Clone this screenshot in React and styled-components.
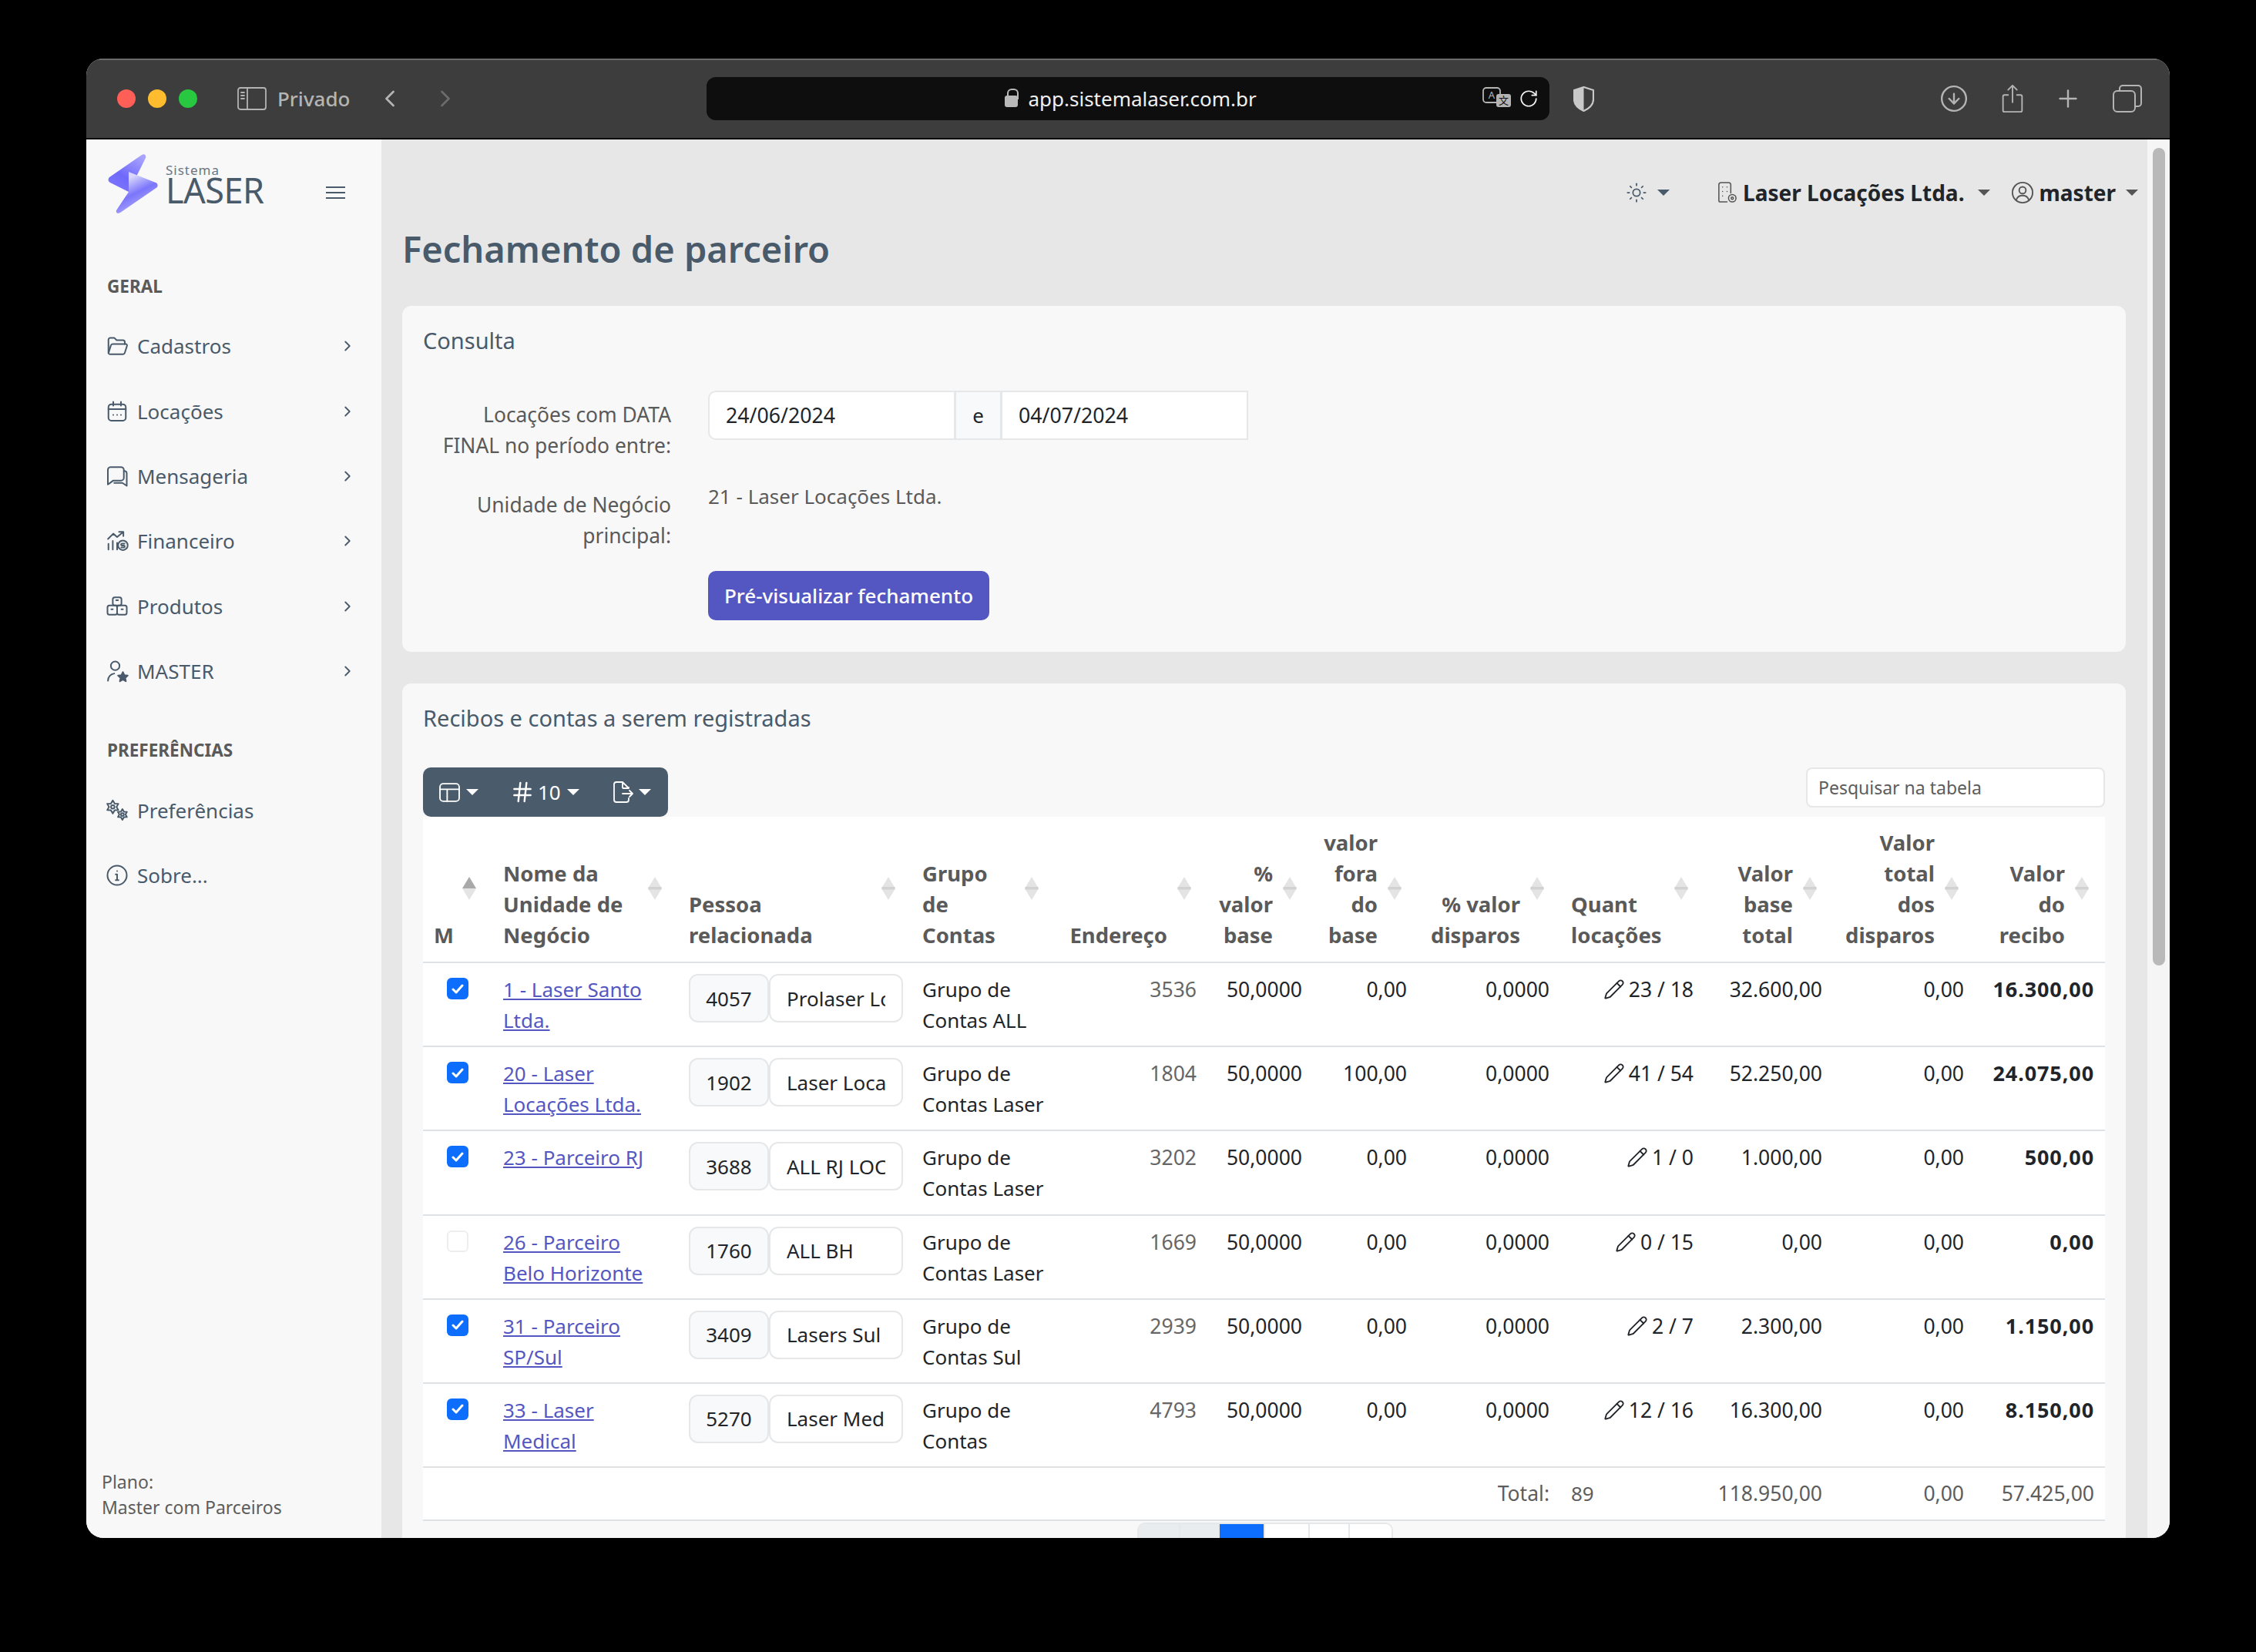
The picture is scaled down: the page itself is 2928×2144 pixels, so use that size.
import React from "react";
import styled, { createGlobalStyle } from "styled-components";
import { ChevronLeft, ChevronRight, Plus, Hash, Pencil, Sun, RotateCw, CircleArrowDown } from "lucide-react";

const Global = createGlobalStyle`
  html, body { margin: 0; padding: 0; background: #000; height: 2144px; overflow: hidden; }
  body { width: 2928px; font-family: "Noto Sans", "Open Sans", sans-serif; font-size: 26px; line-height: 40px; color: #212529; }
  * { box-sizing: border-box; }
`;

const Page = styled.div`
  padding: 76px 112px 148px;
  height: 2144px;
  overflow: hidden;
`;
const Win = styled.div`
  width: 2704px;
  height: 1920px;
  border-radius: 22px;
  overflow: hidden;
  display: flex;
  flex-direction: column;
  background: #f8f8f8;
`;

/* safari bar */
const Bar = styled.div`
  height: 105px;
  flex: none;
  background: #3d3d3d;
  border-top: 2px solid #6b6b6b;
  border-bottom: 2px solid #0a0a0a;
  display: flex;
  align-items: center;
  padding-bottom: 1px;
  color: #b4b4b4;
`;
const Dot = styled.span`
  width: 24px;
  height: 24px;
  border-radius: 50%;
  background: ${p => p.$c};
  margin-left: ${p => p.$ml}px;
  flex: none;
`;
const BarSlot = styled.span`
  display: flex;
  flex: none;
  margin-left: ${p => p.$ml}px;
  color: ${p => p.$c || "inherit"};
`;
const Privado = styled.span`
  margin-left: 14px;
  font-size: 26px;
  font-weight: 500;
  color: #b4b4b4;
`;
const Url = styled.div`
  width: 1094px;
  height: 56px;
  margin-left: 321px;
  flex: none;
  background: #0e0e0e;
  border-radius: 12px;
  display: flex;
  align-items: center;
  padding-left: 387px;
  color: #f2f2f2;
  font-size: 26px;
`;
const Lock = styled.span`
  width: 17px;
  height: 15px;
  margin-right: 13px;
  margin-top: 7px;
  background: #b9b9b9;
  border-radius: 3px;
  position: relative;
  &::before {
    content: "";
    position: absolute;
    left: 3px;
    top: -9px;
    width: 11px;
    height: 12px;
    border: 2px solid #b9b9b9;
    border-bottom: 0;
    border-radius: 6px 6px 0 0;
  }
`;
const UrlText = styled.span`
  width: 296px;
  white-space: nowrap;
  color: #f0f0f0;
`;

/* app layout */
const Body = styled.div`
  flex: 1;
  display: flex;
  min-height: 0;
`;
const Side = styled.aside`
  width: 383px;
  flex: none;
  background: #f8f8f8;
  display: flex;
  flex-direction: column;
  color: #495a6b;
`;
const Brand = styled.div`
  height: 103px;
  margin-top: 18px;
  display: flex;
  align-items: flex-start;
  padding-left: 28px;
`;
const BrandText = styled.div`
  margin-left: 9px;
  margin-top: 14px;
  display: flex;
  flex-direction: column;
  width: 208px;
`;
const Sistema = styled.span`
  font-size: 17px;
  line-height: 16px;
  letter-spacing: 1px;
  color: #6a7784;
`;
const Laser = styled.span`
  font-size: 45px;
  line-height: 36px;
  color: #495a6b;
  letter-spacing: -0.5px;
`;
const Burger = styled.span`
  width: 25px;
  height: 16px;
  margin-top: 43px;
  border-top: 2px solid #495a6b;
  border-bottom: 2px solid #495a6b;
  position: relative;
  &::after {
    content: "";
    position: absolute;
    left: 0;
    right: 0;
    top: 5px;
    height: 2px;
    background: #495a6b;
  }
`;
const NavHead = styled.div`
  margin: ${p => p.$mt}px 0 0 27px;
  font-size: 22.500px;
  line-height: 28px;
  font-weight: 700;
  color: #5a5a5a;
`;
const Spacer = styled.div`
  height: 21px;
`;
const NavItem = styled.div`
  height: 84.4px;
  display: flex;
  align-items: center;
  padding: 0 33px 0 25px;
  color: #495a6b;
  font-size: 26px;
`;
const NavLabel = styled.span`
  margin-left: 11px;
  flex: 1;
`;
const Plano = styled.div`
  margin-top: auto;
  padding: 0 0 23px 20px;
  font-size: 23px;
  line-height: 33px;
  color: #5d5d5d;
`;

const Main = styled.main`
  flex: 1;
  background: #e7e7e7;
  padding: 0 28px 0 27px;
  overflow: hidden;
  min-width: 0;
`;
const Track = styled.div`
  width: 29px;
  flex: none;
  background: #f5f5f5;
  padding: 11px 6px 0 7px;
`;
const Thumb = styled.div`
  height: 1061px;
  background: #b9b9b9;
  border-radius: 8px;
`;
const Top = styled.div`
  height: 40px;
  margin-top: 49px;
  display: flex;
  align-items: center;
  color: #212529;
  font-weight: 700;
  font-size: 28px;
  white-space: nowrap;
`;
const TopSlot = styled.span`
  display: flex;
  align-items: center;
  margin-left: ${p => p.$ml || 0}px;
  color: ${p => p.$c || "inherit"};
`;
const Caret = styled.span`
  display: inline-block;
  flex: none;
  width: 0;
  height: 0;
  border-left: ${p => p.$s || 8}px solid transparent;
  border-right: ${p => p.$s || 8}px solid transparent;
  border-top: ${p => p.$s || 8}px solid ${p => p.$c || "#555"};
  margin-left: ${p => p.$ml || 0}px;
`;
const Title = styled.h1`
  margin: 23px 0 44px;
  font-size: 47px;
  line-height: 60px;
  font-weight: 600;
  color: #495a6b;
`;
const Card = styled.section`
  background: #f8f8f8;
  border-radius: 12px;
  padding: ${p => p.$pt}px 27px ${p => p.$pb}px;
  margin-bottom: 41px;
`;
const CardTitle = styled.h2`
  margin: 0;
  font-size: 29px;
  line-height: 40px;
  font-weight: 400;
  color: #495a6b;
`;
const FormRow = styled.div`
  display: grid;
  grid-template-columns: 322px 1fr;
  column-gap: 48px;
  margin-bottom: 26px;
`;
const FormFirst = styled(FormRow)`
  margin-top: 45px;
`;
const Label = styled.div`
  text-align: right;
  padding-top: 11px;
  color: #5a5a5a;
  font-size: 26.400px;
`;
const Static = styled.div`
  color: #5a5a5a;
  font-size: 26px;
`;
const DateGroup = styled.div`
  display: flex;
  height: 64px;
  width: 703px;
`;
const DateBox = styled.div`
  width: 321px;
  background: #fff;
  border: 2px solid #e6e7e8;
  border-radius: ${p => (p.$first ? "10px 0 0 10px" : "0")};
  padding-left: 21px;
  display: flex;
  align-items: center;
  font-size: 26.700px;
`;
const DateJoin = styled.div`
  width: 61px;
  margin: 0 -1px;
  background: #f8f9fa;
  border: 2px solid #e6e7e8;
  display: flex;
  align-items: center;
  justify-content: center;
  font-size: 26px;
`;
const Primary = styled.button`
  width: 365px;
  height: 64px;
  border: 0;
  border-radius: 10px;
  background: #5457c1;
  color: #fff;
  font-family: inherit;
  font-size: 26px;
  font-weight: 500;
  padding: 0;
`;
const Tools = styled.div`
  margin-top: 44px;
  height: 64px;
  display: flex;
  justify-content: space-between;
  align-items: flex-start;
`;
const ToolGroup = styled.div`
  width: 318px;
  height: 64px;
  border-radius: 10px;
  background: #4a5b6c;
  color: #fff;
  display: flex;
  align-items: center;
  padding-left: 21px;
`;
const ToolSlot = styled.span`
  display: flex;
  align-items: center;
  margin-left: ${p => p.$ml || 0}px;
`;
const Search = styled.div`
  width: 388px;
  height: 52px;
  background: #fff;
  border: 2px solid #e6e7e8;
  border-radius: 8px;
  padding-left: 14px;
  display: flex;
  align-items: center;
  font-size: 23px;
  color: #5d5d5d;
`;

const Table = styled.table`
  width: 2183px;
  table-layout: fixed;
  border-collapse: separate;
  border-spacing: 0;
  background: #fff;
`;
const Col = styled.col`
  width: ${p => p.$w}px;
`;
const Th = styled.th`
  position: relative;
  padding: 14px 14px 14px;
  padding-right: ${p => (p.$right ? 52 : 14)}px;
  text-align: ${p => (p.$right ? "right" : "left")};
  vertical-align: bottom;
  font-weight: 700;
  font-size: 27.500px;
  color: #5a5a5a;
  border-bottom: 2px solid #dfe2e4;
  white-space: nowrap;
`;
const Sort = styled.svg`
  position: absolute;
  right: 20px;
  top: 78px;
  width: 20px;
  height: 30px;
`;
const Td = styled.td`
  padding: 14px 14px 13.2px;
  vertical-align: top;
  text-align: ${p => (p.$right ? "right" : "left")};
  font-weight: ${p => (p.$bold ? 700 : 400)};
  letter-spacing: ${p => (p.$bold ? 0.9 : 0)}px;
  color: ${p => p.$c || "#212529"};
  font-size: ${p => (p.$bold ? 27 : p.$right ? 26.5 : 26)}px;
  height: 109.2px;
  border-bottom: 2px solid #dfe2e4;
  white-space: nowrap;
`;
const Foot = styled(Td)`
  height: 69px;
  padding: 13px 14px;
  color: #5d5d5d;
`;
const Check = styled.span`
  display: flex;
  align-items: center;
  justify-content: center;
  width: 28px;
  height: 28px;
  margin: 5px 0 0 17px;
  border-radius: 6px;
  background: ${p => (p.$on ? "#0d6efd" : "#fff")};
  border: ${p => (p.$on ? "0" : "2px solid #eceeef")};
`;
const Link = styled.a`
  color: #5457c1;
  text-decoration: underline;
  display: block;
`;
const PersonGroup = styled.div`
  display: flex;
  width: 278px;
  height: 63px;
`;
const PersonId = styled.div`
  width: 104px;
  background: #f8f9fa;
  border: 2px solid #e6e7e8;
  border-radius: 12px;
  display: flex;
  align-items: center;
  justify-content: center;
`;
const PersonName = styled.div`
  width: 174px;
  background: #fff;
  border: 2px solid #e6e7e8;
  border-radius: 12px;
  padding: 0 21px;
  display: flex;
  align-items: center;
`;
const PersonClip = styled.span`
  display: block;
  overflow: hidden;
`;
const Qty = styled.span`
  display: inline-flex;
  align-items: center;
  gap: 5px;
`;
const Pager = styled.div`
  display: flex;
  width: 332px;
  height: 60px;
  margin: 2px 0 0 927px;
  border: 2px solid #e6e7e8;
  border-radius: 10px 10px 0 0;
  overflow: hidden;
`;
const PageCell = styled.span`
  width: ${p => p.$w}px;
  flex: none;
  background: ${p => p.$bg};
  border-right: 2px solid #e6e7e8;
`;

const Svg = styled.svg`
  flex: none;
  width: ${p => p.$s || 30}px;
  height: ${p => p.$s || 30}px;
  fill: none;
  stroke: currentColor;
  stroke-width: ${p => p.$sw || 1.6};
  stroke-linecap: round;
  stroke-linejoin: round;
`;
const Chev = styled(ChevronRight)`
  flex: none;
`;

const icons = {
  folder: <><path d="M3 19V5.5A2 2 0 0 1 5 3.5h4l2.5 2.5H18a2 2 0 0 1 2 2V10" /><path d="M3 19.5l2.5-8A2 2 0 0 1 7.4 10H21a1.4 1.4 0 0 1 1.3 1.8L20 19a2.2 2.2 0 0 1-2 1.6H5a2 2 0 0 1-2-1.1z" /></>,
  calendar: <><rect x="3" y="4.5" width="18" height="17" rx="3" /><path d="M3 9.5h18M8 2v4M16 2v4M8 15.5h.01M12 15.5h.01M16 15.5h.01" /></>,
  chat: <><path d="M5 2.5h11a3 3 0 0 1 3 3v8a3 3 0 0 1-3 3H8l-4 3-1.600 1V5a3 3 0 0 1 2.600-2.500z" /><path d="M19 6.500h.500a2.500 2.500 0 0 1 2.500 2.500v13l-4.500-3H9" /></>,
  money: <><path d="M3 21v-6M7.500 21v-9M12 21v-7" /><path d="M2.500 10L8 4.500l4 3.500 6-5M14 2.500h4.500V7" /><circle cx="18" cy="16.500" r="5" /><path d="M19.700 14.800h-2.600a1 1 0 0 0 0 2h1.800a1 1 0 0 1 0 2h-2.600" /></>,
  boxes: <><rect x="7.500" y="2.500" width="9" height="8.500" rx="2" /><rect x="2" y="11" width="10" height="9.500" rx="2" /><rect x="12" y="11" width="10" height="9.500" rx="2" /><path d="M11 5.500h2M6 15h1.500M16.500 15H18" /></>,
  userStar: <><circle cx="10" cy="6.500" r="4.500" /><path d="M2.500 22c0-4 2.800-7 6.500-7.500" /><path d="M18 13l1.500 3.200 3.500.4-2.600 2.400.7 3.500-3.100-1.800-3.100 1.800.7-3.500-2.600-2.400 3.500-.4z" fill="currentColor" /></>,
  gears: <><path d="M7.500 1.500l2 3.300 3.800.1-1.900 3.300 1.900 3.300-3.800.1-2 3.300-2-3.300-3.800-.1 1.900-3.300L1.700 4.900l3.800-.1z" /><circle cx="7.500" cy="8.200" r="1.800" /><path d="M17.500 10.500l1.600 2.700 3.100.1-1.500 2.700 1.500 2.700-3.100.1-1.600 2.700-1.600-2.700-3.100-.1 1.500-2.700-1.500-2.700 3.100-.1z" /><circle cx="17.500" cy="16" r="1.500" /></>,
  info: <><circle cx="12" cy="12" r="10" /><path d="M12 11v6M12 7.500h.01M10.500 11H12M10.500 17h3" /></>,
};

const Ico = ({ name, s }) => <Svg viewBox="0 0 24 24" $s={s}>{icons[name]}</Svg>;

const Logo = () => (
  <svg width="66" height="80" viewBox="0 0 66 80">
    <defs>
      <linearGradient id="lg1" x1="0.8" y1="0" x2="0.2" y2="1">
        <stop offset="0" stopColor="#a9a5ff" />
        <stop offset="0.6" stopColor="#6f69fb" />
        <stop offset="1" stopColor="#7c76fb" />
      </linearGradient>
      <linearGradient id="lg2" x1="0.2" y1="0.2" x2="0.6" y2="1">
        <stop offset="0" stopColor="#d9d8fb" />
        <stop offset="0.45" stopColor="#7b75fb" />
        <stop offset="1" stopColor="#b9b6fc" />
      </linearGradient>
    </defs>
    <path d="M44 2c3-2 6 0 5 4L27 50 3 38c-3-1.500-3-5-1-7z" fill="url(#lg1)" />
    <path d="M27 24l35 14c3 1 3 4 2 6L16 77c-3 2-6 0-5-3l16-24z" fill="url(#lg2)" />
  </svg>
);

const Sidebar = () => (
  <Svg viewBox="0 0 38 30" $s={38} $sw={1.8}>
    <rect x="1" y="1" width="36" height="28" rx="3" />
    <path d="M13 1v28M5 7h4M5 11h4M5 15h4" />
  </Svg>
);
const Share = () => (
  <Svg viewBox="0 0 32 40" $s={38} $sw={2}>
    <path d="M10 15H5a2 2 0 0 0-2 2v19a2 2 0 0 0 2 2h22a2 2 0 0 0 2-2V17a2 2 0 0 0-2-2h-5M16 25V2M10 8l6-6 6 6" />
  </Svg>
);
const Tabs = () => (
  <Svg viewBox="0 0 38 36" $s={38} $sw={2}>
    <rect x="1" y="8" width="28" height="27" rx="5" />
    <path d="M9 8V5a4 4 0 0 1 4-4h20a4 4 0 0 1 4 4v19a4 4 0 0 1-4 4h-4" />
  </Svg>
);
const Shield = () => (
  <svg width="27" height="33" viewBox="0 0 27 33">
    <path d="M13.500 1L26 5v12c0 8-6 12-12.500 15C7 29 1 25 1 17V5z" fill="none" stroke="#c8c8c8" strokeWidth="2.200" />
    <path d="M13.500 1L1 5v12c0 8 6 12 12.500 15z" fill="#c8c8c8" />
  </svg>
);
const Translate = () => (
  <svg width="38" height="30" viewBox="0 0 38 30">
    <rect x="1" y="1" width="22" height="19" rx="4" fill="none" stroke="#b4b4b4" strokeWidth="1.800" />
    <text x="12" y="15" fontSize="13" textAnchor="middle" fill="#b4b4b4" fontFamily="Noto Sans">A</text>
    <rect x="18" y="9" width="19" height="17" rx="3" fill="#b4b4b4" />
    <text x="27.500" y="22" fontSize="13" textAnchor="middle" fill="#111" fontFamily="Noto Sans CJK SC">文</text>
  </svg>
);
const Building = () => (
  <Svg viewBox="0 0 26 30" $s={29} $sw={1.6}>
    <path d="M13 27H4a2 2 0 0 1-2-2V4a3 3 0 0 1 3-3h10a3 3 0 0 1 3 3v11" />
    <path d="M7 7h.01M13 7h.01M7 13h.01M13 13h.01M7 19h.01" />
    <circle cx="20" cy="22" r="5" />
    <circle cx="20" cy="22" r="1.500" />
  </Svg>
);
const UserRound = () => (
  <Svg viewBox="0 0 24 24" $s={30} $sw={1.5}>
    <circle cx="12" cy="12" r="10.500" />
    <circle cx="12" cy="9.500" r="3.500" />
    <path d="M5.500 19.500c1-3 3.500-4.500 6.500-4.500s5.500 1.500 6.500 4.500" />
  </Svg>
);
const LayoutIcon = () => (
  <Svg viewBox="0 0 26 26" $s={27} $sw={1.8}>
    <rect x="1" y="2" width="24" height="22" rx="4" />
    <path d="M1 9h24M10 9v15" />
  </Svg>
);
const FileOut = () => (
  <Svg viewBox="0 0 28 28" $s={28} $sw={1.8}>
    <path d="M22 8v1h-7a1 1 0 0 1-1-1V1H6a3 3 0 0 0-3 3v20a3 3 0 0 0 3 3h13a3 3 0 0 0 3-3v-2M14 1l8 8M14 16h13M23 12l4 4-4 4" />
  </Svg>
);
const SortIcon = ({ up }) => (
  <Sort viewBox="0 0 20 30">
    <path d="M10 0l9 15H1z" fill={up ? "#a9a9a9" : "#e4e4e4"} />
    <path d="M10 30l-9-15h18z" fill="#e4e4e4" />
    {!up && <rect x="1.500" y="13" width="17" height="3.500" fill="#d2d2d2" />}
  </Sort>
);

const nav = [
  ["folder", "Cadastros"],
  ["calendar", "Locações"],
  ["chat", "Mensageria"],
  ["money", "Financeiro"],
  ["boxes", "Produtos"],
  ["userStar", "MASTER"],
];

const cols = [90, 241, 303, 186, 198, 137, 136, 185, 187, 167, 184, 169];

const headers = [
  { lines: ["M"], up: true },
  { lines: ["Nome da", "Unidade de", "Negócio"] },
  { lines: ["Pessoa", "relacionada"] },
  { lines: ["Grupo", "de", "Contas"] },
  { lines: ["Endereço"], right: true },
  { lines: ["%", "valor", "base"], right: true },
  { lines: ["valor", "fora", "do", "base"], right: true },
  { lines: ["% valor", "disparos"], right: true },
  { lines: ["Quant", "locações"] },
  { lines: ["Valor", "base", "total"], right: true },
  { lines: ["Valor", "total", "dos", "disparos"], right: true },
  { lines: ["Valor", "do", "recibo"], right: true },
];

const rows = [
  { on: true, nome: ["1 - Laser Santo", "Ltda."], id: "4057", pessoa: "Prolaser Locações", grupo: ["Grupo de", "Contas ALL"], end: "3536", fora: "0,00", qty: "23 / 18", base: "32.600,00", recibo: "16.300,00" },
  { on: true, nome: ["20 - Laser", "Locações Ltda."], id: "1902", pessoa: "Laser Locações", grupo: ["Grupo de", "Contas Laser"], end: "1804", fora: "100,00", qty: "41 / 54", base: "52.250,00", recibo: "24.075,00" },
  { on: true, nome: ["23 - Parceiro RJ"], id: "3688", pessoa: "ALL RJ LOCAÇÕES", grupo: ["Grupo de", "Contas Laser"], end: "3202", fora: "0,00", qty: "1 / 0", base: "1.000,00", recibo: "500,00" },
  { on: false, nome: ["26 - Parceiro", "Belo Horizonte"], id: "1760", pessoa: "ALL BH", grupo: ["Grupo de", "Contas Laser"], end: "1669", fora: "0,00", qty: "0 / 15", base: "0,00", recibo: "0,00" },
  { on: true, nome: ["31 - Parceiro", "SP/Sul"], id: "3409", pessoa: "Lasers Sul", grupo: ["Grupo de", "Contas Sul"], end: "2939", fora: "0,00", qty: "2 / 7", base: "2.300,00", recibo: "1.150,00" },
  { on: true, nome: ["33 - Laser", "Medical"], id: "5270", pessoa: "Laser Medical", grupo: ["Grupo de", "Contas"], end: "4793", fora: "0,00", qty: "12 / 16", base: "16.300,00", recibo: "8.150,00" },
];

const pages = [
  [54, "#e9ecef"],
  [51, "#e9ecef"],
  [59, "#0d6efd"],
  [58, "#fff"],
  [52, "#fff"],
  [56, "#fff"],
];

export default function App() {
  return (
    <>
      <Global />
      <Page>
        <Win>
          <Bar>
            <Dot $c="#ff5f57" $ml={40} />
            <Dot $c="#febc2e" $ml={16} />
            <Dot $c="#28c840" $ml={16} />
            <BarSlot $ml={52}><Sidebar /></BarSlot>
            <Privado>Privado</Privado>
            <BarSlot $ml={34}><ChevronLeft size={36} strokeWidth={1.8} /></BarSlot>
            <BarSlot $ml={36} $c="#6c6c6c"><ChevronRight size={36} strokeWidth={1.8} /></BarSlot>
            <Url>
              <Lock />
              <UrlText>app.sistemalaser.com.br</UrlText>
              <BarSlot $ml={294}><Translate /></BarSlot>
              <BarSlot $ml={9}><RotateCw size={26} strokeWidth={1.6} /></BarSlot>
            </Url>
            <BarSlot $ml={31}><Shield /></BarSlot>
            <BarSlot $ml={448}><CircleArrowDown size={38} strokeWidth={1.5} /></BarSlot>
            <BarSlot $ml={38}><Share /></BarSlot>
            <BarSlot $ml={35}><Plus size={36} strokeWidth={1.6} /></BarSlot>
            <BarSlot $ml={40}><Tabs /></BarSlot>
          </Bar>
          <Body>
            <Side>
              <Brand>
                <Logo />
                <BrandText>
                  <Sistema>Sistema</Sistema>
                  <Laser>LASER</Laser>
                </BrandText>
                <Burger />
              </Brand>
              <NavHead $mt={56}>GERAL</NavHead>
              <div>
                <Spacer />
                {nav.map(([icon, label]) => (
                  <NavItem key={label}>
                    <Ico name={icon} />
                    <NavLabel>{label}</NavLabel>
                    <Chev size={22} strokeWidth={2} />
                  </NavItem>
                ))}
              </div>
              <NavHead $mt={47}>PREFERÊNCIAS</NavHead>
              <div>
                <Spacer />
                <NavItem><Ico name="gears" /><NavLabel>Preferências</NavLabel></NavItem>
                <NavItem><Ico name="info" /><NavLabel>Sobre...</NavLabel></NavItem>
              </div>
              <Plano>Plano:<br />Master com Parceiros</Plano>
            </Side>
            <Main>
              <Top>
                <TopSlot $ml={1588} $c="#495a6b"><Sun size={28} strokeWidth={1.5} /></TopSlot>
                <Caret $ml={13} $c="#495a6b" />
                <TopSlot $ml={60} $c="#555"><Building /></TopSlot>
                <TopSlot $ml={6}>Laser Locações Ltda.</TopSlot>
                <Caret $ml={17} />
                <TopSlot $ml={27} $c="#555"><UserRound /></TopSlot>
                <TopSlot $ml={7}>master</TopSlot>
                <Caret $ml={13} />
              </Top>
              <Title>Fechamento de parceiro</Title>
              <Card $pt={25} $pb={15}>
                <CardTitle>Consulta</CardTitle>
                <FormFirst>
                  <Label>Locações com DATA<br />FINAL no período entre:</Label>
                  <DateGroup>
                    <DateBox $first>24/06/2024</DateBox>
                    <DateJoin>e</DateJoin>
                    <DateBox>04/07/2024</DateBox>
                  </DateGroup>
                </FormFirst>
                <FormRow>
                  <Label>Unidade de Negócio<br />principal:</Label>
                  <Static>21 - Laser Locações Ltda.</Static>
                </FormRow>
                <FormRow>
                  <span />
                  <div><Primary>Pré-visualizar fechamento</Primary></div>
                </FormRow>
              </Card>
              <Card $pt={25} $pb={0}>
                <CardTitle>Recibos e contas a serem registradas</CardTitle>
                <Tools>
                  <ToolGroup>
                    <LayoutIcon />
                    <Caret $ml={8} $c="#fff" />
                    <ToolSlot $ml={41}><Hash size={32} strokeWidth={1.8} /></ToolSlot>
                    <ToolSlot $ml={4}>10</ToolSlot>
                    <Caret $ml={8} $c="#fff" />
                    <ToolSlot $ml={42}><FileOut /></ToolSlot>
                    <Caret $ml={7} $c="#fff" />
                  </ToolGroup>
                  <Search>Pesquisar na tabela</Search>
                </Tools>
                <Table>
                  <colgroup>
                    {cols.map((w, i) => <Col key={i} $w={w} />)}
                  </colgroup>
                  <thead>
                    <tr>
                      {headers.map((h, i) => (
                        <Th key={i} $right={h.right}>
                          {h.lines.map((l, j) => <div key={j}>{l}</div>)}
                          <SortIcon up={h.up} />
                        </Th>
                      ))}
                    </tr>
                  </thead>
                  <tbody>
                    {rows.map(r => (
                      <tr key={r.id}>
                        <Td>
                          <Check $on={r.on}>
                            {r.on && (
                              <svg width="16" height="13" viewBox="0 0 16 13">
                                <path d="M2 7l4 4 8-9" fill="none" stroke="#fff" strokeWidth="3" strokeLinecap="round" strokeLinejoin="round" />
                              </svg>
                            )}
                          </Check>
                        </Td>
                        <Td>{r.nome.map(n => <Link key={n}>{n}</Link>)}</Td>
                        <Td>
                          <PersonGroup>
                            <PersonId>{r.id}</PersonId>
                            <PersonName><PersonClip>{r.pessoa}</PersonClip></PersonName>
                          </PersonGroup>
                        </Td>
                        <Td>{r.grupo.map(g => <div key={g}>{g}</div>)}</Td>
                        <Td $right $c="#666">{r.end}</Td>
                        <Td $right>50,0000</Td>
                        <Td $right>{r.fora}</Td>
                        <Td $right>0,0000</Td>
                        <Td $right>
                          <Qty><Pencil size={28} strokeWidth={1.6} />{r.qty}</Qty>
                        </Td>
                        <Td $right>{r.base}</Td>
                        <Td $right>0,00</Td>
                        <Td $right $bold>{r.recibo}</Td>
                      </tr>
                    ))}
                  </tbody>
                  <tfoot>
                    <tr>
                      <Foot colSpan={7} />
                      <Foot $right>Total:</Foot>
                      <Foot>89</Foot>
                      <Foot $right>118.950,00</Foot>
                      <Foot $right>0,00</Foot>
                      <Foot $right>57.425,00</Foot>
                    </tr>
                  </tfoot>
                </Table>
                <Pager>
                  {pages.map(([w, bg], i) => <PageCell key={i} $w={w} $bg={bg} />)}
                </Pager>
              </Card>
            </Main>
            <Track><Thumb /></Track>
          </Body>
        </Win>
      </Page>
    </>
  );
}
